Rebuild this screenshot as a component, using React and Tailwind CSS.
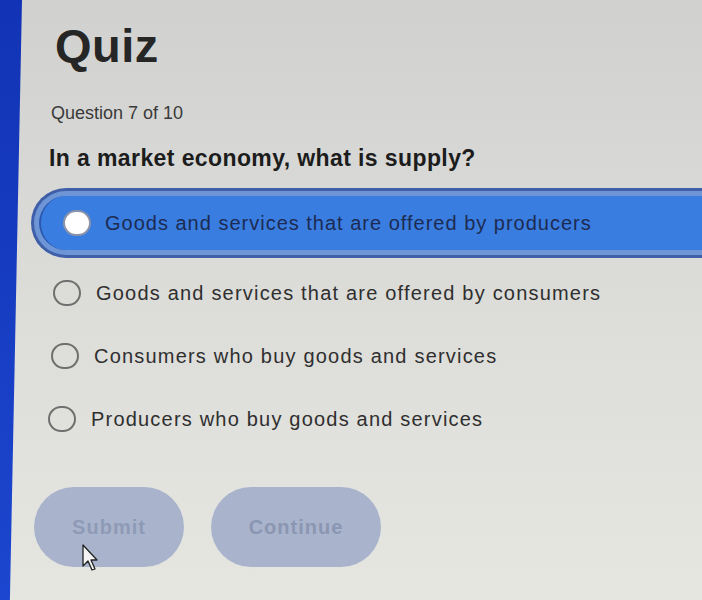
import { useState } from 'react';

const options = [
  'Goods and services that are offered by producers',
  'Goods and services that are offered by consumers',
  'Consumers who buy goods and services',
  'Producers who buy goods and services',
];

// the photo is a bit skewed, so each row sits slightly further left
const rowShift = ['ml-[0px]', 'ml-[22px]', 'ml-[20px]', 'ml-[17px]'];

function Radio({ selected }) {
  return (
    <span
      className={`shrink-0 w-[28px] h-[26px] rounded-full border-2 ${
        selected ? 'bg-white border-[#8a93a8]' : 'bg-transparent border-[#6f6f6f]'
      }`}
    />
  );
}

export default function App() {
  const [picked] = useState(0);

  return (
    <div
      className="relative flex w-[702px] h-[600px] overflow-hidden bg-gradient-to-b from-[#d1d2d0] via-[#dcdcd9] to-[#e6e6e1]"
      style={{ fontFamily: '"Liberation Sans", Arial, sans-serif' }}
    >
      {/* blue edge of the window behind */}
      <div className="shrink-0 w-[22px] h-full bg-gradient-to-b from-[#1233b5] to-[#1c46cf] [clip-path:polygon(0_0,100%_0,45%_100%,0_100%)]" />

      <div className="flex-1 flex flex-col pt-[22px] pl-[33px]">
        <h1 className="text-[47px] leading-none font-bold text-[#262626] tracking-[0.5px]">Quiz</h1>

        <p className="mt-[33px] text-[18px] leading-[22px] text-[#3a3a3a] -ml-[4px]">Question 7 of 10</p>

        <h2 className="mt-[20px] text-[23px] leading-[28px] font-bold text-[#1c1c1c] tracking-[0.4px] -ml-[6px]">
          In a market economy, what is supply?
        </h2>

        <div className="mt-[16px] flex flex-col -ml-[24px]">
          {options.map((opt, i) =>
            i === picked ? (
              <div
                key={opt}
                className="-mr-[60px] h-[70px] rounded-l-full border-[3px] border-r-0 border-[#3f5fa8] bg-[#6e95d6] p-[5px] pr-0"
              >
                <div className="h-full rounded-l-full bg-[#3a7de0] flex items-center gap-[14px] pl-[22px] border-l-2 border-[#2a58b0]">
                  <Radio selected />
                  <span className="text-[20px] tracking-[1px] text-[#1d2b52]">{opt}</span>
                </div>
              </div>
            ) : (
              <div key={opt} className={`flex items-center gap-[15px] h-[63px] ${rowShift[i]} ${i === 1 ? 'mt-[3px]' : ''}`}>
                <Radio />
                <span className="text-[20px] tracking-[1.2px] text-[#2f2f2f]">{opt}</span>
              </div>
            )
          )}
        </div>

        <div className="mt-[37px] flex gap-[27px] -ml-[21px]">
          <button className="w-[150px] h-[80px] rounded-full bg-[#a9b4cc] text-[20px] font-bold tracking-[1px] text-[#8e9ab6]">
            Submit
          </button>
          <button className="w-[170px] h-[80px] rounded-full bg-[#a9b4cc] text-[20px] font-bold tracking-[1px] text-[#8b96b2]">
            Continue
          </button>
        </div>
      </div>

      {/* mouse pointer */}
      <svg className="absolute left-[82px] top-[544px]" width="16" height="28" viewBox="0 0 16 28">
        <path d="M1 1 L1 22 L6 17 L10 26 L13 25 L9 16 L15 16 Z" fill="#f4f4f4" stroke="#222" strokeWidth="1.3" strokeLinejoin="round" />
      </svg>
    </div>
  );
}
